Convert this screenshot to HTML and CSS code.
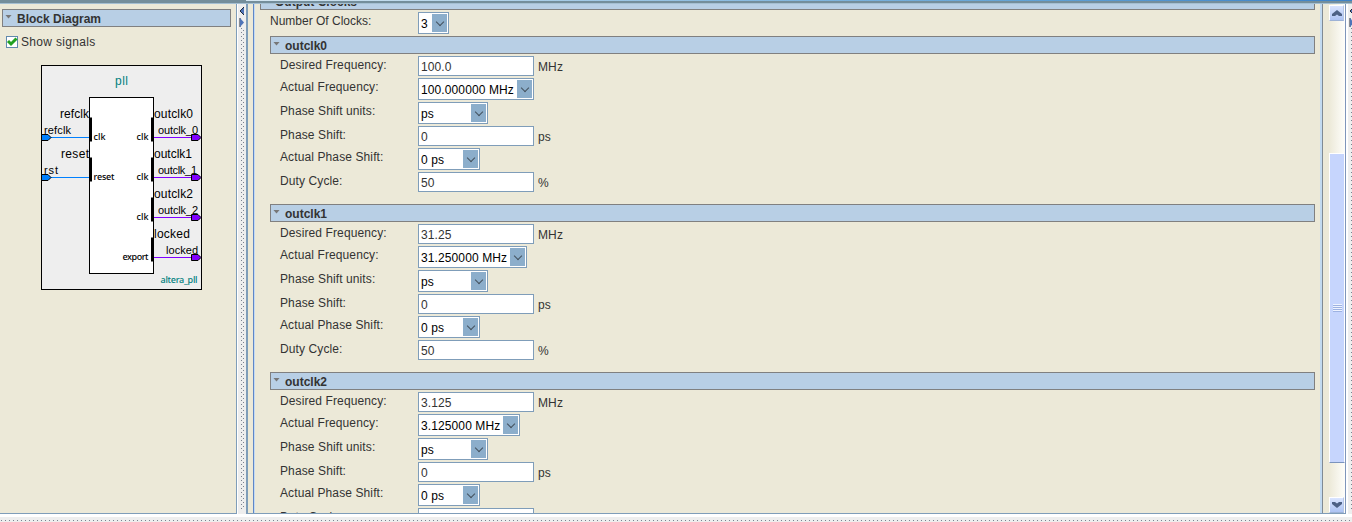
FILE: index.html
```html
<!DOCTYPE html>
<html lang="en">
<head>
<meta charset="utf-8">
<title>PLL parameters</title>
<link rel="stylesheet" href="styles.css">
</head>
<body>
<div class="window">
  <div class="top-edge"><div class="top-accent"></div></div>
  <div class="workspace">
    <aside class="sidebar">
      <h2 class="bar"><span class="twisty"></span>Block Diagram</h2>
      <div class="check-row">
        <svg class="check" width="12" height="12" viewBox="0 0 12 12"><rect x=".5" y=".5" width="11" height="11" fill="#fff" stroke="#6089ad"/><path d="M2 5l3 3 5.500-5.500" fill="none" stroke="#21a121" stroke-width="3"/></svg>
        <span>Show signals</span>
      </div>
      <svg class="diagram" width="161" height="225" viewBox="0 0 161 225">
        <rect class="outer" x=".5" y=".5" width="160" height="224"/>
        <rect class="inner" x="48.500" y="32.500" width="64" height="176"/>
        <g class="in"><path d="M9 72.500H48M9 112.500H48"/></g>
        <g class="out"><path d="M113 72.500H150M113 112.500H150M113 152.500H150M113 192.500H150"/></g>
        <path class="stub" d="M49.500 52.500v24M49.500 92.500v24M111.500 52.500v24M111.500 92.500v24M111.500 132.500v24M111.500 172.500v24"/>
        <g class="pin-in"><path d="M.5 69.500H7l3 3-3 3H.5zM.5 109.500H7l3 3-3 3H.5z"/></g>
        <g class="pin-out"><path d="M150.500 69.500H157l3 3-3 3h-6.500zM150.500 109.500H157l3 3-3 3h-6.500zM150.500 149.500H157l3 3-3 3h-6.500zM150.500 189.500H157l3 3-3 3h-6.500z"/></g>
        <g class="big">
          <text class="teal" x="74" y="20" textLength="13">pll</text>
          <text x="19" y="53" textLength="29">refclk</text>
          <text x="20" y="93" textLength="28">reset</text>
          <text x="113" y="53" textLength="39">outclk0</text>
          <text x="113" y="93" textLength="38">outclk1</text>
          <text x="113" y="133" textLength="39">outclk2</text>
          <text x="113" y="173" textLength="36">locked</text>
        </g>
        <g class="mid">
          <text x="3" y="69" textLength="27">refclk</text>
          <text x="3" y="109" textLength="14">rst</text>
          <text x="117" y="69" textLength="40">outclk_0</text>
          <text x="117" y="109" textLength="39">outclk_1</text>
          <text x="117" y="149" textLength="40">outclk_2</text>
          <text x="125" y="189" textLength="32">locked</text>
        </g>
        <g class="small">
          <text x="52.500" y="75" textLength="12">clk</text>
          <text x="52.500" y="115" textLength="21">reset</text>
          <text x="95.500" y="75" textLength="12">clk</text>
          <text x="95.500" y="115" textLength="12">clk</text>
          <text x="95.500" y="155" textLength="12">clk</text>
          <text x="81.500" y="195" textLength="26">export</text>
          <text class="teal" x="119.500" y="218" textLength="37">altera_pll</text>
        </g>
      </svg>
    </aside>
    <div class="splitter">
      <svg class="arrows" width="6" height="22" viewBox="0 0 6 22"><path d="M5 1v8L1 5z" fill="#4f74b8"/><path d="M5 1L1 5l4 4M1 12v9" fill="none" stroke="#222b3b"/><path d="M1 12v9l4-4.500z" fill="#4f74b8"/></svg>
      <div class="dots"></div>
    </div>
    <main class="main">
      <div class="form">
        <h2 class="bar group-title"><span class="twisty"></span>Output Clocks</h2>
        <div class="row count-row"><label>Number Of Clocks:</label><div class="combo tiny">3<i></i></div></div>
        <div id="clocks"></div>
      </div>
      <div class="scrollbar">
        <div class="sb-button"><svg width="10" height="7" viewBox="0 0 10 7"><path d="M0 6V4l5-4 5 4v2H7L5 4.500 3 6z"/></svg></div>
        <div class="thumb"><span class="grip"></span></div>
        <div class="sb-button"><svg width="10" height="7" viewBox="0 0 10 7"><path d="M0 0v2l5 4 5-4V0H7L5 1.500 3 0z"/></svg></div>
      </div>
    </main>
    <div class="splitter right">
      <svg class="arrows" width="6" height="22" viewBox="0 0 6 22"><path d="M5 1v8L1 5z" fill="#4f74b8"/><path d="M5 1L1 5l4 4M1 12v9" fill="none" stroke="#222b3b"/><path d="M1 12v9l4-4.500z" fill="#4f74b8"/></svg>
      <div class="dots"></div>
    </div>
  </div>
  <div class="bottom-splitter"></div>
</div>
<script src="app.js"></script>
</body>
</html>
```
FILE: styles.css
```css
* { box-sizing: border-box; }
body { margin: 0; background: #fff; overflow: hidden; font: 12px/14px "Liberation Sans", Arial, sans-serif; color: #333; }
.window { height: 522px; display: flex; flex-direction: column; overflow: hidden; }
.top-edge { height: 4px; flex: none; background: linear-gradient(#748e9b 0 3px, #a4bfd2 3px); }
.top-accent { height: 1px; margin-left: 246px; background: linear-gradient(90deg, #d5e7f2, #62a3d6 70%, #3c82c8); }
.workspace { height: 510px; display: flex; flex: none; }
.sidebar { width: 237px; flex: none; background: #ece9d8; border-right: 1px solid #7f9db9; border-bottom: 1px solid #7f9db9; padding: 5px 5px 0 2px; }
.bar { display: flex; align-items: center; margin: 0; height: 18px; font-size: 12px; line-height: 16px; font-weight: bold; background: #b8cfe5; border: 1px solid #808080; padding: 1px 0 0 2px; }
.twisty { width: 7px; height: 4px; margin: -4px 5px 0 0; background: #777; clip-path: polygon(0 0, 100% 0, 50% 100%); }
.sidebar .bar { margin-bottom: 8px; }
.check-row { display: flex; gap: 3px; padding-left: 4px; align-items: center; height: 14px; letter-spacing: .33px; }
.diagram { display: block; margin: 16px 0 0 39px; font-family: "Liberation Sans", Arial, sans-serif; }
.outer { fill: #eee; stroke: #000; }
.inner { fill: #fff; stroke: #000; }
.in { stroke: #0080ff; }
.out { stroke: #8000ff; }
.stub { stroke: #000; stroke-width: 3; }
.pin-in { fill: #0080ff; stroke: #000; }
.pin-out { fill: #8000ff; stroke: #000; }
.big { font-size: 12px; }
.mid { font-size: 11px; }
.small { font: 500 9px "Noto Sans", sans-serif; }
.teal { fill: #008080; }
.splitter { width: 9px; flex: none; background: #eee; border-left: 1px solid #fff; padding: 2px 0 0 1px; display: flex; flex-direction: column; }
.arrows { flex: none; }
.dots { flex: none; width: 4px; height: 482px; margin-left: 2px; background: conic-gradient(from 270deg at 1px 1px, #7b8290 90deg, transparent 0) 0 0 / 4px 4px, conic-gradient(from 270deg at 1px 1px, #7b8290 90deg, transparent 0) 2px 2px / 4px 4px; }
.splitter.right { width: 6px; overflow: hidden; border-left-width: 2px; }
.main { width: 1100px; flex: none; display: flex; background: #ece9d8; border-left: 2px solid #7f9db9; border-right: 1px solid #7f96bb; border-bottom: 1px solid #7f9db9; }
.form { width: 1070px; margin-left: 5px; border-left: 1px solid #5f87c7; border-right: 1px solid #808a94; box-shadow: inset 1px 0 #c4daf1, inset -2px 0 #c2daf0; height: 509px; overflow: hidden; padding: 0 7px 0 16px; }
.group-title { height: 18px; margin: -12px 0 2px -10px; padding-top: 2px; }
.row { display: grid; grid-template-columns: 138px auto auto 1fr; align-items: start; }
.row label { line-height: 18px; }
.count-row { height: 24px; grid-template-columns: 148px auto 1fr; }
.section { height: 168px; }
.fields { display: flex; flex-direction: column; gap: 2px; padding: 2px 0 0 10px; letter-spacing: .11px; }
.input { width: 116px; height: 20px; line-height: 20px; background: #fff; border: 1px solid #7f9db9; padding-left: 2px; }
.combo { display: flex; justify-content: space-between; width: 70px; height: 22px; line-height: 22px; color: #000; background: #fff; border: 1px solid #7f9db9; padding: 0 1px 0 2px; white-space: nowrap; }
.combo i { width: 15px; height: 18px; margin-top: 1px; background: #8caecb; display: grid; place-items: center; }
.combo i::before { content: ""; width: 5px; height: 5px; margin-top: -3px; border: solid #44525e; border-width: 0 1px 1px 0; transform: rotate(45deg); }
.tiny { width: 31px; }
.unit { height: 20px; padding-left: 4px; line-height: 22px; }
.scrollbar { width: 16px; margin-left: 6px; padding: 1px 0 0; background: linear-gradient(90deg, #ece9d8, #fefefb); display: flex; flex-direction: column; }
.sb-button { width: 15px; height: 16px; background: linear-gradient(#dae5ff, #adc3f3); border: 1px solid #fff; border-right-color: #b7c7e6; border-bottom-color: #9db2d6; display: grid; place-items: center; }
.sb-button svg { fill: #4d6185; }
.thumb { height: 310px; margin: 132px 0 34px; background: #c6d5fd; border: 1px solid #fff; border-bottom: 1px solid #7b93bd; display: grid; place-items: center; }
.grip { width: 9px; height: 8px; background: repeating-linear-gradient(#eef3ff 0 1px, #9db2e2 1px 2px); }
.bottom-splitter { height: 8px; border-top: 3px solid #fff; background: conic-gradient(from 270deg at 1px 1px, #7b8290 90deg, transparent 0) 1px 3px / 4px 4px, #eee; }
```
FILE: app.js
```js
const clocks = [
  ["outclk0", "100.0", "100.000000 MHz", 116],
  ["outclk1", "31.25", "31.250000 MHz", 109],
  ["outclk2", "3.125", "3.125000 MHz", 102]
];
const input = (label, value, unit) =>
  `<div class="row"><label>${label}</label><div class="input">${value}</div><span class="unit">${unit}</span></div>`;
const combo = (label, value, width) =>
  `<div class="row"><label>${label}</label><div class="combo" style="width:${width}px">${value}<i></i></div></div>`;
document.getElementById("clocks").innerHTML = clocks.map(([name, wanted, actual, width]) =>
  `<section class="section"><h2 class="bar"><span class="twisty"></span>${name}</h2><div class="fields">` +
  input("Desired Frequency:", wanted, "MHz") +
  combo("Actual Frequency:", actual, width) +
  combo("Phase Shift units:", "ps", 70) +
  input("Phase Shift:", "0", "ps") +
  combo("Actual Phase Shift:", "0 ps", 62) +
  input("Duty Cycle:", "50", "%") +
  `</div></section>`).join("");
```
